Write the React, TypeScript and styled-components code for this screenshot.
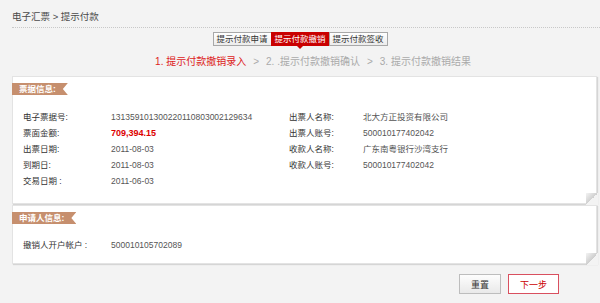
import React from "react";
import styled, { createGlobalStyle } from "styled-components";

const GlobalStyle = createGlobalStyle`
    html, body {
        margin: 0;
        padding: 0;
        background: #f3f3f3;
    }
    body {
        font-family: "Liberation Sans", "Noto Sans CJK SC", sans-serif;
        color: #333;
        line-height: 1.2;
    }
`;

const Page = styled.div`
    width: 600px;
    height: 303px;
    padding-left: 12px;
    box-sizing: border-box;
    overflow: hidden;
`;

const Header = styled.div`
    height: 28px;
    box-sizing: border-box;
    padding-top: 11px;
    font-size: 9.5px;
    color: #4a4a4a;
    border-bottom: 1px dotted #c8c8c8;
`;

const Tabs = styled.div`
    display: flex;
    justify-content: center;
    margin-top: 4px;
    padding-right: 12px;
`;

const Tab = styled.div<{ $active?: boolean }>`
    position: relative;
    width: 59px;
    height: 14px;
    box-sizing: border-box;
    display: flex;
    align-items: center;
    justify-content: center;
    font-size: 8.5px;
    border: 1px solid ${(p) => (p.$active ? "#c00" : "#a8a8a8")};
    background: ${(p) => (p.$active ? "#c80000" : "linear-gradient(#fff, #ececec)")};
    color: ${(p) => (p.$active ? "#fff" : "#333")};
    & + & {
        margin-left: -1px;
    }
    &::after {
        content: "";
        display: ${(p) => (p.$active ? "block" : "none")};
        position: absolute;
        left: 50%;
        bottom: -4px;
        margin-left: -3px;
        border-left: 3px solid transparent;
        border-right: 3px solid transparent;
        border-top: 3px solid #c80000;
    }
`;

const Steps = styled.div`
    display: flex;
    justify-content: center;
    align-items: center;
    gap: 7px;
    height: 16px;
    margin-top: 8px;
    padding-left: 14px;
    font-size: 10px;
    color: #aaa;
`;

const Step = styled.span<{ $current?: boolean }>`
    color: ${(p) => (p.$current ? "#d22" : "#aaa")};
`;

const Panel = styled.div<{ $gap?: number; $pad?: number }>`
    position: relative;
    width: 585px;
    box-sizing: border-box;
    margin-top: ${(p) => p.$gap ?? 0}px;
    padding: 6px 0 ${(p) => p.$pad ?? 14}px;
    background: #fff;
    border: 1px solid #e3e3e3;
    box-shadow: 1px 1px 1px rgba(0, 0, 0, 0.12);
    &::after {
        content: "";
        position: absolute;
        right: -2px;
        bottom: -2px;
        width: 12px;
        height: 12px;
        background: linear-gradient(to top left, #f3f3f3 50%, #cfcfcf 50%, #f4f4f4 100%);
    }
`;

const Ribbon = styled.div`
    display: flex;
    align-items: center;
    width: fit-content;
    height: 12px;
    margin-left: -1px;
    padding: 0 12px 0 7px;
    background: #c68f6e;
    color: #fff;
    font-size: 8.5px;
    font-weight: bold;
    clip-path: polygon(0 0, 100% 0, calc(100% - 5px) 50%, 100% 100%, 0 100%);
`;

const Grid = styled.div<{ $top: number }>`
    display: grid;
    grid-template-columns: 88px 178px 74px 1fr;
    grid-auto-rows: 16px;
    align-items: center;
    margin-top: ${(p) => p.$top}px;
    padding-left: 10px;
    font-size: 8.5px;
`;

const Label = styled.span`
    color: #333;
`;

const Value = styled.span<{ $amount?: boolean }>`
    color: ${(p) => (p.$amount ? "#d00" : "#555")};
    font-weight: ${(p) => (p.$amount ? "bold" : "normal")};
    font-size: ${(p) => (p.$amount ? "9px" : "8.5px")};
`;

const Actions = styled.div`
    display: flex;
    justify-content: flex-end;
    gap: 7px;
    margin-top: 10px;
    padding-right: 41px;
`;

const Button = styled.button<{ $primary?: boolean }>`
    height: 20px;
    width: ${(p) => (p.$primary ? "51px" : "42px")};
    padding: 0;
    font-family: inherit;
    font-size: 9px;
    border: 1px solid ${(p) => (p.$primary ? "#d9505f" : "#bdbdbd")};
    background: ${(p) => (p.$primary ? "#fff" : "linear-gradient(#fdfdfd, #e9e9e9)")};
    color: ${(p) => (p.$primary ? "#c00" : "#333")};
`;

const billRows: [string, string, string?, string?][] = [
    ["电子票据号:", "131359101300220110803002129634", "出票人名称:", "北大方正投资有限公司"],
    ["票面金额:", "709,394.15", "出票人账号:", "500010177402042"],
    ["出票日期:", "2011-08-03", "收款人名称:", "广东南粤银行沙湾支行"],
    ["到期日:", "2011-08-03", "收款人账号:", "500010177402042"],
    ["交易日期 :", "2011-06-03"],
];

export default function App() {
    return (
        <Page>
            <GlobalStyle />
            <Header>电子汇票 &gt; 提示付款</Header>
            <Tabs>
                <Tab>提示付款申请</Tab>
                <Tab $active>提示付款撤销</Tab>
                <Tab>提示付款签收</Tab>
            </Tabs>
            <Steps>
                <Step $current>1. 提示付款撤销录入</Step>
                <span>&gt;</span>
                <Step>2. .提示付款撤销确认</Step>
                <span>&gt;</span>
                <Step>3. 提示付款撤销结果</Step>
            </Steps>
            <Panel $gap={6}>
                <Ribbon>票据信息:</Ribbon>
                <Grid $top={14}>
                    {billRows.map(([l1, v1, l2, v2], i) => (
                        <React.Fragment key={i}>
                            <Label>{l1}</Label>
                            <Value $amount={i === 1}>{v1}</Value>
                            <Label>{l2 ?? ""}</Label>
                            <Value>{v2 ?? ""}</Value>
                        </React.Fragment>
                    ))}
                </Grid>
            </Panel>
            <Panel $gap={1} $pad={10}>
                <Ribbon>申请人信息:</Ribbon>
                <Grid $top={13}>
                    <Label>撤销人开户帐户 :</Label>
                    <Value>500010105702089</Value>
                </Grid>
            </Panel>
            <Actions>
                <Button>重置</Button>
                <Button $primary>下一步</Button>
            </Actions>
        </Page>
    );
}
